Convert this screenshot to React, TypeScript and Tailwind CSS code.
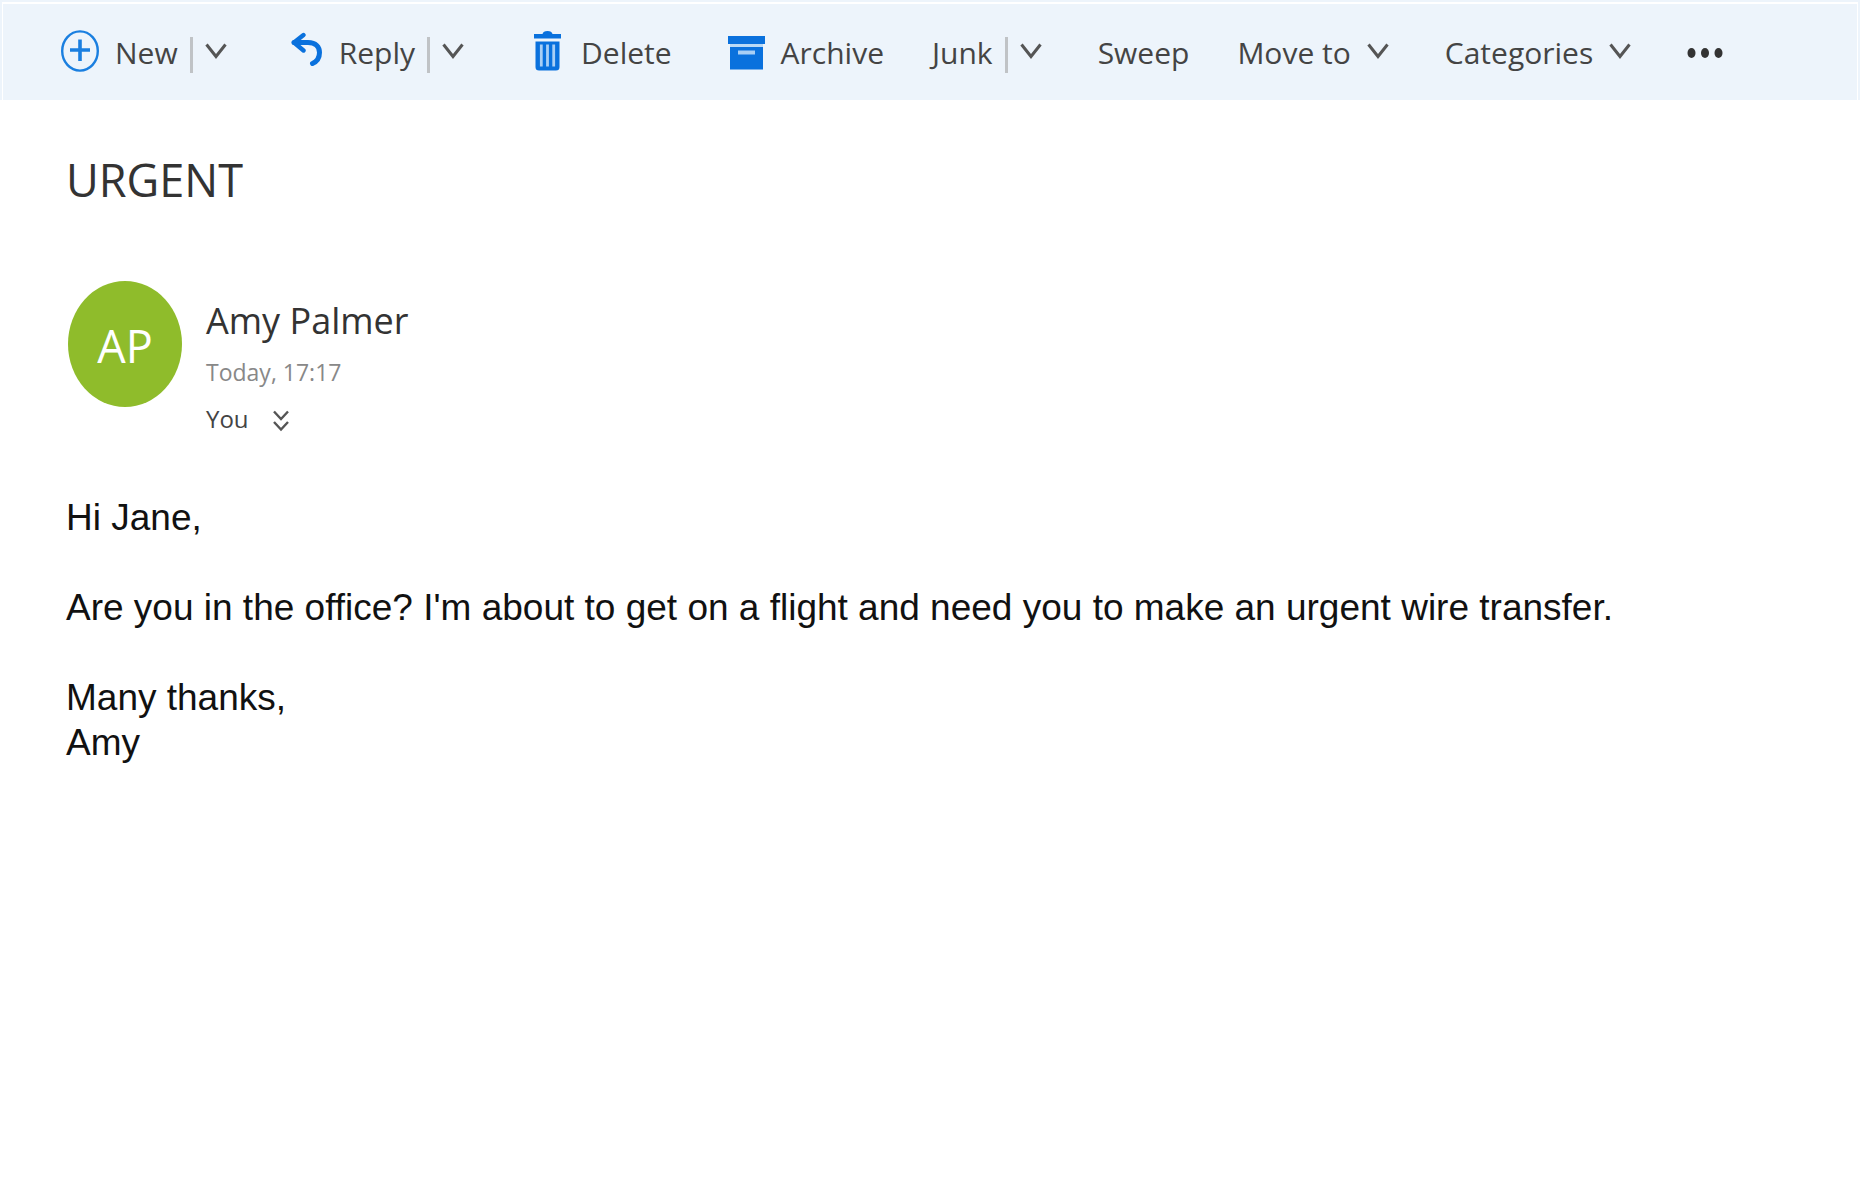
import type { ReactNode } from "react";
import { twMerge } from "tailwind-merge";

const Chevron = () => (
  <svg viewBox="0 0 22 17" className="h-[17px] w-[22px]" fill="none" stroke="#555555" strokeWidth="3">
    <path d="M1.5 1.5 L11 13.5 L20.5 1.5" />
  </svg>
);

const PlusCircleIcon = () => (
  <svg viewBox="0 0 38 42" className="h-[42px] w-[38px]" fill="none" stroke="#1a7fe0">
    <ellipse cx="19" cy="21" rx="17.8" ry="19.6" strokeWidth="2.4" />
    <path d="M19 9.5 V31 M9 20 H29" strokeWidth="3.6" />
  </svg>
);

const ReplyIcon = () => (
  <svg viewBox="0 0 32 34" className="h-[34px] w-8" fill="none" stroke="#0a71dd" strokeWidth="5" strokeLinecap="round" strokeLinejoin="round">
    <path d="M3 10.5 H17 C25 10.5 28.5 15 28.5 20.5 C28.5 26 26 29.500 21.500 31.5" />
    <path d="M12.5 3 L3 10.5 L12.5 18.5" strokeWidth="4.4" />
  </svg>
);

const TrashIcon = () => (
  <svg viewBox="0 0 27 40" className="h-10 w-[27px]">
    <path d="M0 3 H8.5 C9 1 10.5 0 13.5 0 C16.5 0 18 1 18.5 3 H27 V7.5 H0 Z" fill="#0a71dd" />
    <path d="M1.5 10.5 H25.5 V36 Q25.5 39.5 22 39.5 H5 Q1.5 39.5 1.5 36 Z" fill="#0a71dd" />
    <path d="M7.3 13.5 V35.5 M13.5 13.5 V35.5 M19.7 13.5 V35.5" stroke="#a9cff5" strokeWidth="2.8" />
  </svg>
);

const ArchiveIcon = () => (
  <svg viewBox="0 0 37 34" className="h-[34px] w-[37px]">
    <path d="M0 0 H37 V8 H0 Z M2 11 H35 V33.5 H2 Z" fill="#0a71dd" />
    <path d="M2 8 H35 V11 H2 Z" fill="#b9d9f6" />
    <path d="M10 14.5 H27 V18.5 H10 Z" fill="#a9cff5" />
  </svg>
);

const DoubleChevron = () => (
  <svg viewBox="0 0 16 22" className="h-[22px] w-4" fill="none" stroke="#555555" strokeWidth="2.4">
    <path d="M1 1.5 L8 9 L15 1.5 M1 12 L8 19.5 L15 12" />
  </svg>
);

type Command = {
  label: string;
  icon?: ReactNode;
  menu?: "split" | "inline";
  className: string;
  iconClass?: string;
};

const commands: Command[] = [
  { label: "New", icon: <PlusCircleIcon />, menu: "split", className: "", iconClass: "mr-4" },
  { label: "Reply", icon: <ReplyIcon />, menu: "split", className: "ml-16", iconClass: "mr-4 pb-2" },
  { label: "Delete", icon: <TrashIcon />, className: "ml-[70px]", iconClass: "mr-5" },
  { label: "Archive", icon: <ArchiveIcon />, className: "ml-14", iconClass: "mr-4 pb-0" },
  { label: "Junk", menu: "split", className: "ml-12" },
  { label: "Sweep", className: "ml-14" },
  { label: "Move to", menu: "inline", className: "ml-12" },
  { label: "Categories", menu: "inline", className: "ml-14" },
];

const Toolbar = () => (
  <header className="border-x-2 border-t-2 border-[#edf4fb] bg-white px-px pt-[2px]">
    <nav aria-label="Message actions" className="flex h-24 items-center bg-[#edf4fb] pl-[58px] pt-[2px] text-[30px] leading-10 text-[#444444]">
      {commands.map((command) => (
        <div key={command.label} className={twMerge("flex shrink-0 items-center", command.className)}>
          <button type="button" className="flex items-center whitespace-nowrap">
            {command.icon && <span className={twMerge("pb-1", command.iconClass)}>{command.icon}</span>}
            {command.label}
            {command.menu === "inline" && <span className="ml-4 pb-1"><Chevron /></span>}
          </button>
          {command.menu === "split" && (
            <>
              <span className="ml-3 mt-1 h-9 w-[3px] bg-[#c0c3c6]" />
              <button type="button" aria-label={`${command.label} options`} className="ml-3 pb-1">
                <Chevron />
              </button>
            </>
          )}
        </div>
      ))}
      <button type="button" aria-label="More actions" className="ml-14">
        <svg viewBox="0 0 36 12" className="h-3 w-9" fill="#333333">
          <ellipse cx="4.5" cy="6" rx="4" ry="5" />
          <ellipse cx="18" cy="6" rx="4" ry="5" />
          <ellipse cx="31.5" cy="6" rx="4" ry="5" />
        </svg>
      </button>
    </nav>
  </header>
);

export default function App() {
  return (
    <div className="min-h-screen bg-white font-['Open_Sans',sans-serif]">
      <Toolbar />
      <main className="px-[66px] pt-12">
        <h1 className="text-[45px] leading-[64px] text-[#333333]">URGENT</h1>
        <div className="mt-[69px] flex items-start">
          <div className="ml-[2px] flex h-[126px] w-[114px] shrink-0 items-center justify-center rounded-[50%] bg-[#8fbc2b] pt-1 text-[45px] text-white">
            AP
          </div>
          <div className="ml-6 pt-4">
            <div className="text-[36px] leading-[48px] text-[#333333]">Amy Palmer</div>
            <div className="mt-1 text-[23px] leading-[46px] text-[#888888]">Today, 17:17</div>
            <div className="flex items-center text-[24px] leading-[48px] text-[#444444]">
              You
              <button type="button" aria-label="Show recipients" className="ml-6 pt-1">
                <DoubleChevron />
              </button>
            </div>
          </div>
        </div>
        <div className="mt-[52px] font-['Liberation_Sans',Arial,sans-serif] text-[37px] leading-[45px] text-[#111111]">
          <p>Hi Jane,</p>
          <p className="mt-[45px]">Are you in the office? I'm about to get on a flight and need you to make an urgent wire transfer.</p>
          <p className="mt-[45px]">
            Many thanks,
            <br />
            Amy
          </p>
        </div>
      </main>
    </div>
  );
}
